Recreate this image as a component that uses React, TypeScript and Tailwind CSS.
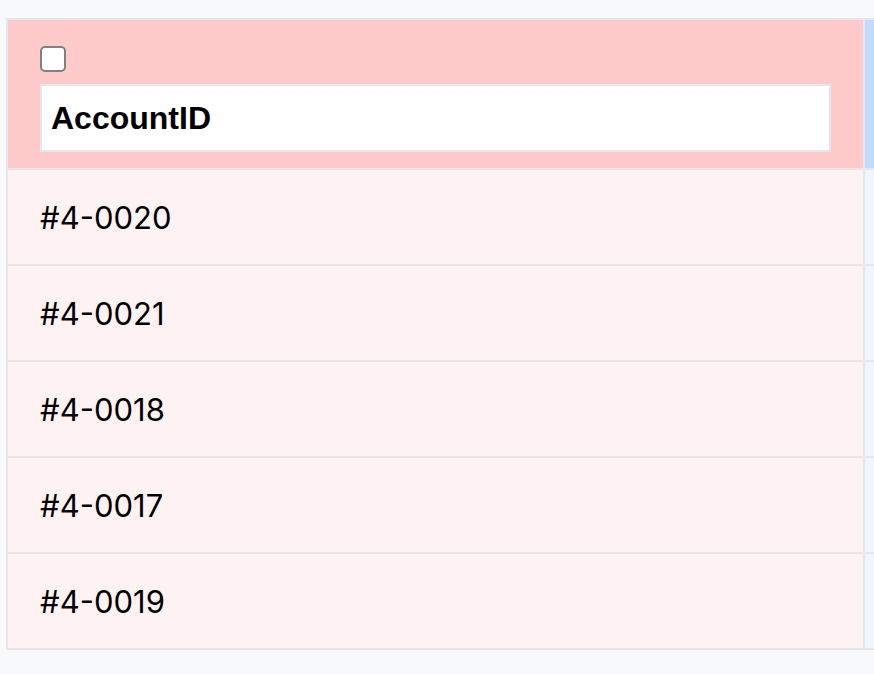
import React from "react";

const rows = ["#4-0020", "#4-0021", "#4-0018", "#4-0017", "#4-0019"];

export default function App() {
  return (
    <div className="min-h-[674px] w-[874px] overflow-hidden bg-[#f8f9fb] pt-[18px] pl-[6px]">
      <div className="w-[900px] border-2 border-r-0 border-[#e5e7eb] flex">
        <div className="w-[857px] shrink-0 border-r-2 border-[#e5e7eb]">
          <div className="bg-[#fecaca] h-[150px] px-[32px] pt-[26px] border-b-2 border-[#e5e7eb] flex flex-col">
            <input
              type="checkbox"
              className="appearance-none w-[26px] h-[26px] border-2 border-[#808080] rounded-[5px] bg-white block"
            />
            <div className="mt-[12px] h-[68px] border-2 border-[#e5e7eb] bg-white flex items-center pl-[9px]">
              <span className="text-[32px] font-bold text-black font-['Liberation_Sans',Arial,sans-serif] leading-none">
                AccountID
              </span>
            </div>
          </div>
          {rows.map((r, i) => (
            <div
              key={r}
              className={`bg-[#fef2f2] px-[32px] flex items-center ${i < rows.length - 1 ? "h-[96px] border-b-2 border-[#e5e7eb]" : "h-[94px]"}`}
            >
              <span className="text-[31px] text-black font-['Inter',sans-serif] leading-none">{r}</span>
            </div>
          ))}
        </div>
        <div className="flex-1">
          <div className="bg-[#bfdbfe] h-[150px] border-b-2 border-[#e5e7eb]"></div>
          {rows.map((r, i) => (
            <div
              key={r}
              className={`bg-[#eff6ff] ${i < rows.length - 1 ? "h-[96px] border-b-2 border-[#e5e7eb]" : "h-[94px]"}`}
            ></div>
          ))}
        </div>
      </div>
    </div>
  );
}
